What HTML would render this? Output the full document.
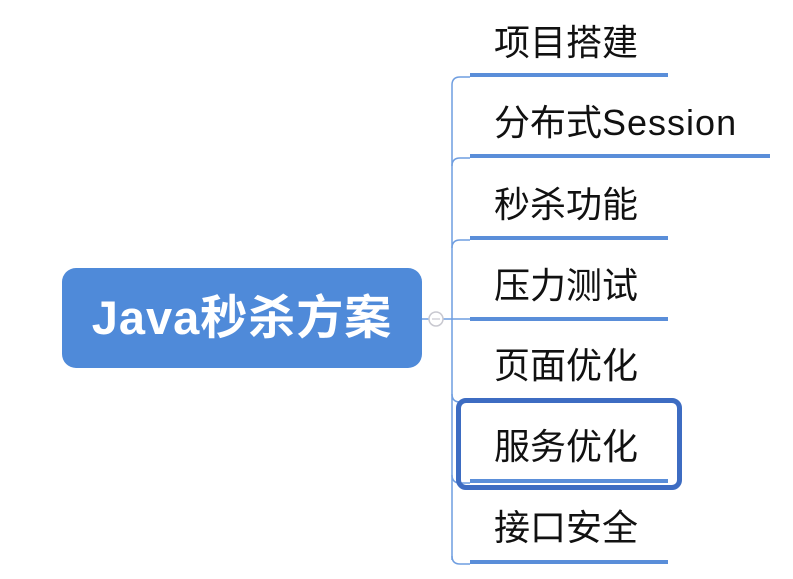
<!DOCTYPE html>
<html><head><meta charset="utf-8"><style>
body{margin:0;width:793px;height:579px;background:#fff;position:relative;overflow:hidden;font-family:"Liberation Sans","Noto Sans CJK SC",sans-serif}
.c{position:absolute;left:62px;top:268px;width:360px;height:100px;background:#4f8ad9;border-radius:14px;color:#fff;font-weight:bold;font-size:47px;line-height:100px;text-align:center;letter-spacing:1px}
.t{position:absolute;left:494px;font-size:36px;color:#111;line-height:44px;white-space:nowrap}
.u{position:absolute;left:470px;height:4px;background:#5a8ed9}
.sel{position:absolute;left:456px;top:398px;width:216px;height:82px;border:5px solid #3d6cc2;border-radius:10px}
</style></head><body>
<div class="c">Java秒杀方案</div>
<svg width="793" height="579" style="position:absolute;left:0;top:0">
<g fill="none" stroke="#6f9ee0" stroke-width="1.5">
<path d="M422 319H429M443 319H452"/>
<path d="M452 85Q452 77 460 77H470M452 560V85"/>
<path d="M452 166Q452 158 460 158H470"/>
<path d="M452 248Q452 240 460 240H470"/>
<path d="M452 319H470"/>
<path d="M452 394Q452 402 460 402H470"/>
<path d="M452 475Q452 483 460 483H470"/>
<path d="M452 556Q452 564 460 564H470"/>
</g>
<circle cx="436" cy="319" r="7" fill="#fff" stroke="#c8c8d0" stroke-width="1.5"/>
<path d="M432 319H440" stroke="#c8c8d0" stroke-width="1.2"/>
</svg>
<div class="t" style="top:21px">项目搭建</div><div class="u" style="top:73px;width:198px"></div>
<div class="t" style="top:101px">分布式<span style="letter-spacing:1px">Session</span></div><div class="u" style="top:154px;width:300px"></div>
<div class="t" style="top:183px">秒杀功能</div><div class="u" style="top:236px;width:198px"></div>
<div class="t" style="top:264px">压力测试</div><div class="u" style="top:317px;width:198px"></div>
<div class="t" style="top:344px">页面优化</div><div class="u" style="top:398px;width:198px"></div>
<div class="t" style="top:425px">服务优化</div><div class="u" style="top:479px;width:198px"></div>
<div class="t" style="top:506px">接口安全</div><div class="u" style="top:560px;width:198px"></div>
<div class="sel"></div>
</body></html>
